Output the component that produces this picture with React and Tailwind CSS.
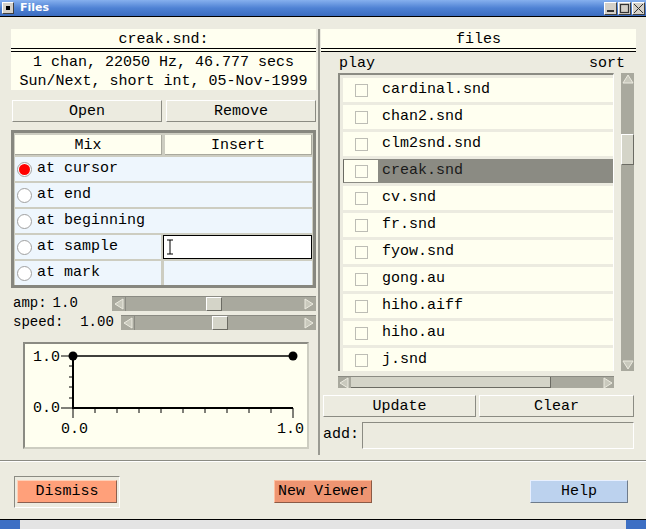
import React from 'react';

const files = [
    'cardinal.snd', 'chan2.snd', 'clm2snd.snd', 'creak.snd', 'cv.snd', 'fr.snd',
    'fyow.snd', 'gong.au', 'hiho.aiff', 'hiho.au', 'j.snd',
];

const raised = 'border border-t-white border-l-white border-r-[#8b8b83] border-b-[#8b8b83]';

function Arrow({ dir }) {
    const pts = {
        left: '10,1 10,11 2,6',
        right: '2,1 2,11 10,6',
        up: '1,10 11,10 6,2',
        down: '1,2 11,2 6,10',
    }[dir];
    return (
        <svg width="12" height="12" viewBox="0 0 12 12" className="shrink-0">
            <polygon points={pts} fill="#c9c9bd" stroke="#ecebe0" strokeWidth="1" />
        </svg>
    );
}

function HSlider({ thumbAt }) {
    return (
        <div className="flex-1 h-[15px] bg-[#a9a99e] border-t border-[#8b8b83] flex items-center justify-between relative">
            <div className="w-[14px] h-full flex items-center justify-center border-r border-[#8b8b83]"><Arrow dir="left" /></div>
            <div className="absolute top-0 h-[14px] w-[16px] bg-[#d4d4c8] border border-t-white border-l-white border-r-[#6b6b63] border-b-[#6b6b63]" style={{ left: thumbAt }} />
            <div className="w-[14px] h-full flex items-center justify-center"><Arrow dir="right" /></div>
        </div>
    );
}

function Radio({ on }) {
    return (
        <span className="w-[15px] h-[15px] rounded-full border border-[#a0a0a0] bg-white flex items-center justify-center shrink-0">
            {on && <span className="w-[11px] h-[11px] rounded-full bg-[#ff0000]" />}
        </span>
    );
}

function Graph() {
    const xt = Array.from({ length: 11 }, (_, i) => 48 + i * 22);
    const yt = [12, 22, 33, 43, 54, 64];
    return (
        <div className="mt-[12px] ml-[12px] w-[286px] h-[107px] border-2 border-t-[#8b8b83] border-l-[#8b8b83] border-r-[#cdcdc1] border-b-[#cdcdc1] bg-[#fffff0]">
            <svg width="282" height="103" viewBox="0 0 282 103">
                <line x1="48" y1="12" x2="268" y2="12" stroke="black" strokeWidth="1.5" />
                <line x1="48" y1="11" x2="48" y2="65" stroke="black" strokeWidth="2" />
                <line x1="47" y1="64" x2="268" y2="64" stroke="black" strokeWidth="2" />
                {yt.map((y, i) => (
                    <line key={y} x1={i === 0 || i === 5 ? 36 : 44} y1={y} x2="48" y2={y} stroke="black" strokeWidth="1" />
                ))}
                {xt.map((x, i) => (
                    <line key={x} x1={x} y1="64" x2={x} y2={i === 0 || i === 10 ? 74 : 69} stroke="black" strokeWidth="1" />
                ))}
                <circle cx="48" cy="12" r="4.5" fill="black" />
                <circle cx="268" cy="12" r="4.5" fill="black" />
                <g fontFamily="Liberation Mono, monospace" fontSize="15" fill="black">
                    <text x="8" y="17">1.0</text>
                    <text x="8" y="68">0.0</text>
                    <text x="36" y="89">0.0</text>
                    <text x="252" y="89">1.0</text>
                </g>
            </svg>
        </div>
    );
}

function LeftPane() {
    return (
        <div className="w-[305px] flex flex-col">
            <div className="h-[19px] bg-[#fffff0] flex items-center justify-center pt-[3px]">creak.snd:</div>
            <div className="h-[4px] bg-[#fffff0] border-t border-b border-black" />
            <div className="h-[38px] bg-[#fffff0] flex flex-col items-center justify-center leading-[19px] pt-[2px]">
                <div>1 chan, 22050 Hz, 46.777 secs</div>
                <div>Sun/Next, short int, 05-Nov-1999</div>
            </div>
            <div className="mt-[10px] flex gap-[4px] pl-[1px]">
                <button className={`w-[150px] h-[22px] ${raised}`}>Open</button>
                <button className={`w-[150px] h-[22px] ${raised}`}>Remove</button>
            </div>
            <div className="mt-[8px] h-[158px] border-[3px] border-[#87877f] bg-[#cdcdc1] px-[1px] pt-[2px] flex flex-col gap-[2px]">
                <div className="flex gap-[3px] h-[20px] shrink-0">
                    <div className="flex-1 bg-[#fffff0] flex items-center justify-center border-r border-b border-[#a9a99e] pt-[3px]">Mix</div>
                    <div className="flex-1 bg-[#fffff0] flex items-center justify-center border-r border-b border-[#a9a99e] pt-[3px]">Insert</div>
                </div>
                {['at cursor', 'at end', 'at beginning'].map((t, i) => (
                    <div key={t} className="h-[24px] shrink-0 bg-[#eef6fd] flex items-center gap-[5px] pl-[2px]">
                        <Radio on={i === 0} />
                        <span>{t}</span>
                    </div>
                ))}
                <div className="h-[24px] shrink-0 flex gap-[2px]">
                    <div className="w-[146px] bg-[#eef6fd] flex items-center gap-[5px] pl-[2px]">
                        <Radio />
                        <span>at sample</span>
                    </div>
                    <div className="flex-1 bg-white border border-black flex items-center pl-[3px]">
                        <svg width="6" height="16" viewBox="0 0 6 16"><path d="M0 1h6M3 1v14M0 15h6" stroke="black" strokeWidth="1" fill="none" /></svg>
                    </div>
                </div>
                <div className="h-[24px] shrink-0 flex gap-[3px]">
                    <div className="w-[146px] bg-[#eef6fd] flex items-center gap-[5px] pl-[2px]">
                        <Radio />
                        <span>at mark</span>
                    </div>
                    <div className="flex-1 bg-[#eef6fd]" />
                </div>
            </div>
            <div className="mt-[8px] flex items-center h-[15px] text-[14px]">
                <span className="w-[101px] pl-[2px]">amp:<span className="ml-[6px]">1.0</span></span>
                <HSlider thumbAt={94} />
            </div>
            <div className="mt-[4px] flex items-center h-[15px] text-[14px]">
                <span className="w-[110px] pl-[2px] whitespace-pre">speed:  1.00</span>
                <HSlider thumbAt={91} />
            </div>
            <Graph />
        </div>
    );
}

function FileRow({ name, selected }) {
    return (
        <div className={`h-[24px] shrink-0 flex items-center ${selected ? 'bg-[#8b8b83] text-[#1a1a1a]' : 'bg-[#fffff0]'}`}>
            <div className={`w-[36px] h-full flex items-center justify-center ${selected ? 'bg-[#fffff0] border border-[#8b8b83] border-l-[#6b6b63]' : ''}`}>
                <span className="w-[13px] h-[13px] border border-[#bdbdb5] bg-[#fffff0]" />
            </div>
            <span className="ml-[3px] pt-[1px]">{name}</span>
        </div>
    );
}

function RightPane() {
    return (
        <div className="w-[315px] flex flex-col">
            <div className="h-[19px] bg-[#fffff0] flex items-center justify-center pt-[3px]">files</div>
            <div className="h-[4px] bg-[#fffff0] border-t border-b border-black" />
            <div className="h-[21px] flex items-end justify-between pl-[18px] pr-[11px] leading-[18px]">
                <span>play</span>
                <span>sort</span>
            </div>
            <div className="flex pl-[17px] h-[298px]">
                <div className="w-[276px] border-t-2 border-l-2 border-[#8b8b83] border-r border-r-white pl-[3px] pt-[3px] flex flex-col gap-[3px] overflow-hidden">
                    {files.map((f) => (
                        <FileRow key={f} name={f} selected={f === 'creak.snd'} />
                    ))}
                </div>
                <div className="ml-[7px] w-[13px] bg-[#a9a99e] flex flex-col relative">
                    <div className="h-[12px] flex items-center justify-center"><Arrow dir="up" /></div>
                    <div className="absolute left-0 top-[61px] w-[13px] h-[31px] bg-[#d4d4c8] border border-t-white border-l-white border-r-[#6b6b63] border-b-[#6b6b63]" />
                    <div className="mt-auto h-[12px] flex items-center justify-center"><Arrow dir="down" /></div>
                </div>
            </div>
            <div className="mt-[5px] ml-[17px] w-[276px] h-[12px] bg-[#a9a99e] border-t border-[#8b8b83] flex items-center justify-between relative">
                <Arrow dir="left" />
                <div className="absolute left-[13px] top-0 w-[200px] h-[11px] bg-[#d4d4c8] border-r border-b border-[#6b6b63]" />
                <Arrow dir="right" />
            </div>
            <div className="mt-[7px] flex gap-[3px] pl-[2px]">
                <button className={`w-[153px] h-[22px] ${raised}`}>Update</button>
                <button className={`w-[155px] h-[22px] ${raised}`}>Clear</button>
            </div>
            <div className="mt-[5px] flex items-center pl-[2px]">
                <span className="w-[39px]">add:</span>
                <div className="w-[272px] h-[27px] border border-[#8b8b83] border-r-white border-b-white" />
            </div>
        </div>
    );
}

export default function App() {
    return (
        <div className="w-[646px] h-[529px] flex flex-col bg-[#ecebe0] text-black font-['Liberation_Mono',monospace] text-[15px] overflow-hidden">
            <div className="h-[16px] bg-gradient-to-b from-[#86b0ee] via-[#4f82d4] to-[#3b6cc0] flex items-center">
                <div className="ml-[2px] w-[12px] h-[12px] bg-[#d4d0c8] border border-t-white border-l-white border-r-[#404040] border-b-[#404040] flex items-center justify-center">
                    <span className="w-[4px] h-[4px] bg-black" />
                </div>
                <span className="ml-[6px] text-white text-[11px] font-bold font-['DejaVu_Sans',sans-serif]">Files</span>
                <div className="ml-auto flex gap-[1px] mr-[1px]">
                    {['min', 'max', 'close'].map((k) => (
                        <div key={k} className="w-[13px] h-[13px] bg-[#d4d0c8] border border-t-white border-l-white border-r-[#404040] border-b-[#404040] flex items-center justify-center">
                            <svg width="11" height="11" viewBox="0 0 11 11">
                                {k === 'min' && <rect x="2" y="7" width="7" height="2" fill="#333" />}
                                {k === 'max' && <rect x="1.5" y="1.5" width="8" height="8" fill="none" stroke="#333" strokeWidth="1.2" />}
                                {k === 'close' && <path d="M1 1L10 10M10 1L1 10" stroke="#333" strokeWidth="1" />}
                            </svg>
                        </div>
                    ))}
                </div>
            </div>
            <div className="h-[1px] bg-black" />
            <div className="flex-1 flex flex-col">
                <div className="mt-[12px] h-[426px] flex pl-[11px]">
                    <LeftPane />
                    <div className="ml-[2px] w-[2px] bg-[#9a9a92]" />
                    <div className="ml-[1px]">
                        <RightPane />
                    </div>
                </div>
                <div className="mt-[5px] h-[2px] border-t border-[#8b8b83] border-b border-b-white" />
                <div className="mt-[14px] flex items-start px-[14px]">
                    <div className="px-[2px] py-[3px] border border-t-[#8b8b83] border-l-[#8b8b83] border-r-white border-b-white">
                        <button className="w-[100px] h-[23px] bg-[#ffa07a] border border-t-[#ffd0b8] border-l-[#ffd0b8] border-r-[#8b6050] border-b-[#8b6050]">Dismiss</button>
                    </div>
                    <button className="mt-[4px] ml-[154px] w-[98px] h-[23px] bg-[#ee9572] border border-t-[#ffc0a0] border-l-[#ffc0a0] border-r-[#8b5a45] border-b-[#8b5a45]">New Viewer</button>
                    <button className="mt-[4px] ml-[158px] w-[98px] h-[23px] bg-[#bcd2ee] border border-t-[#e8f0ff] border-l-[#e8f0ff] border-r-[#6e7b8b] border-b-[#6e7b8b]">Help</button>
                </div>
                <div className="mt-auto h-[10px] border-t border-black flex">
                    <div className="w-[20px] bg-[#3d6fc4]" />
                    <div className="flex-1 bg-[#e4e4e4]" />
                    <div className="w-[20px] bg-[#3d6fc4]" />
                </div>
            </div>
        </div>
    );
}
